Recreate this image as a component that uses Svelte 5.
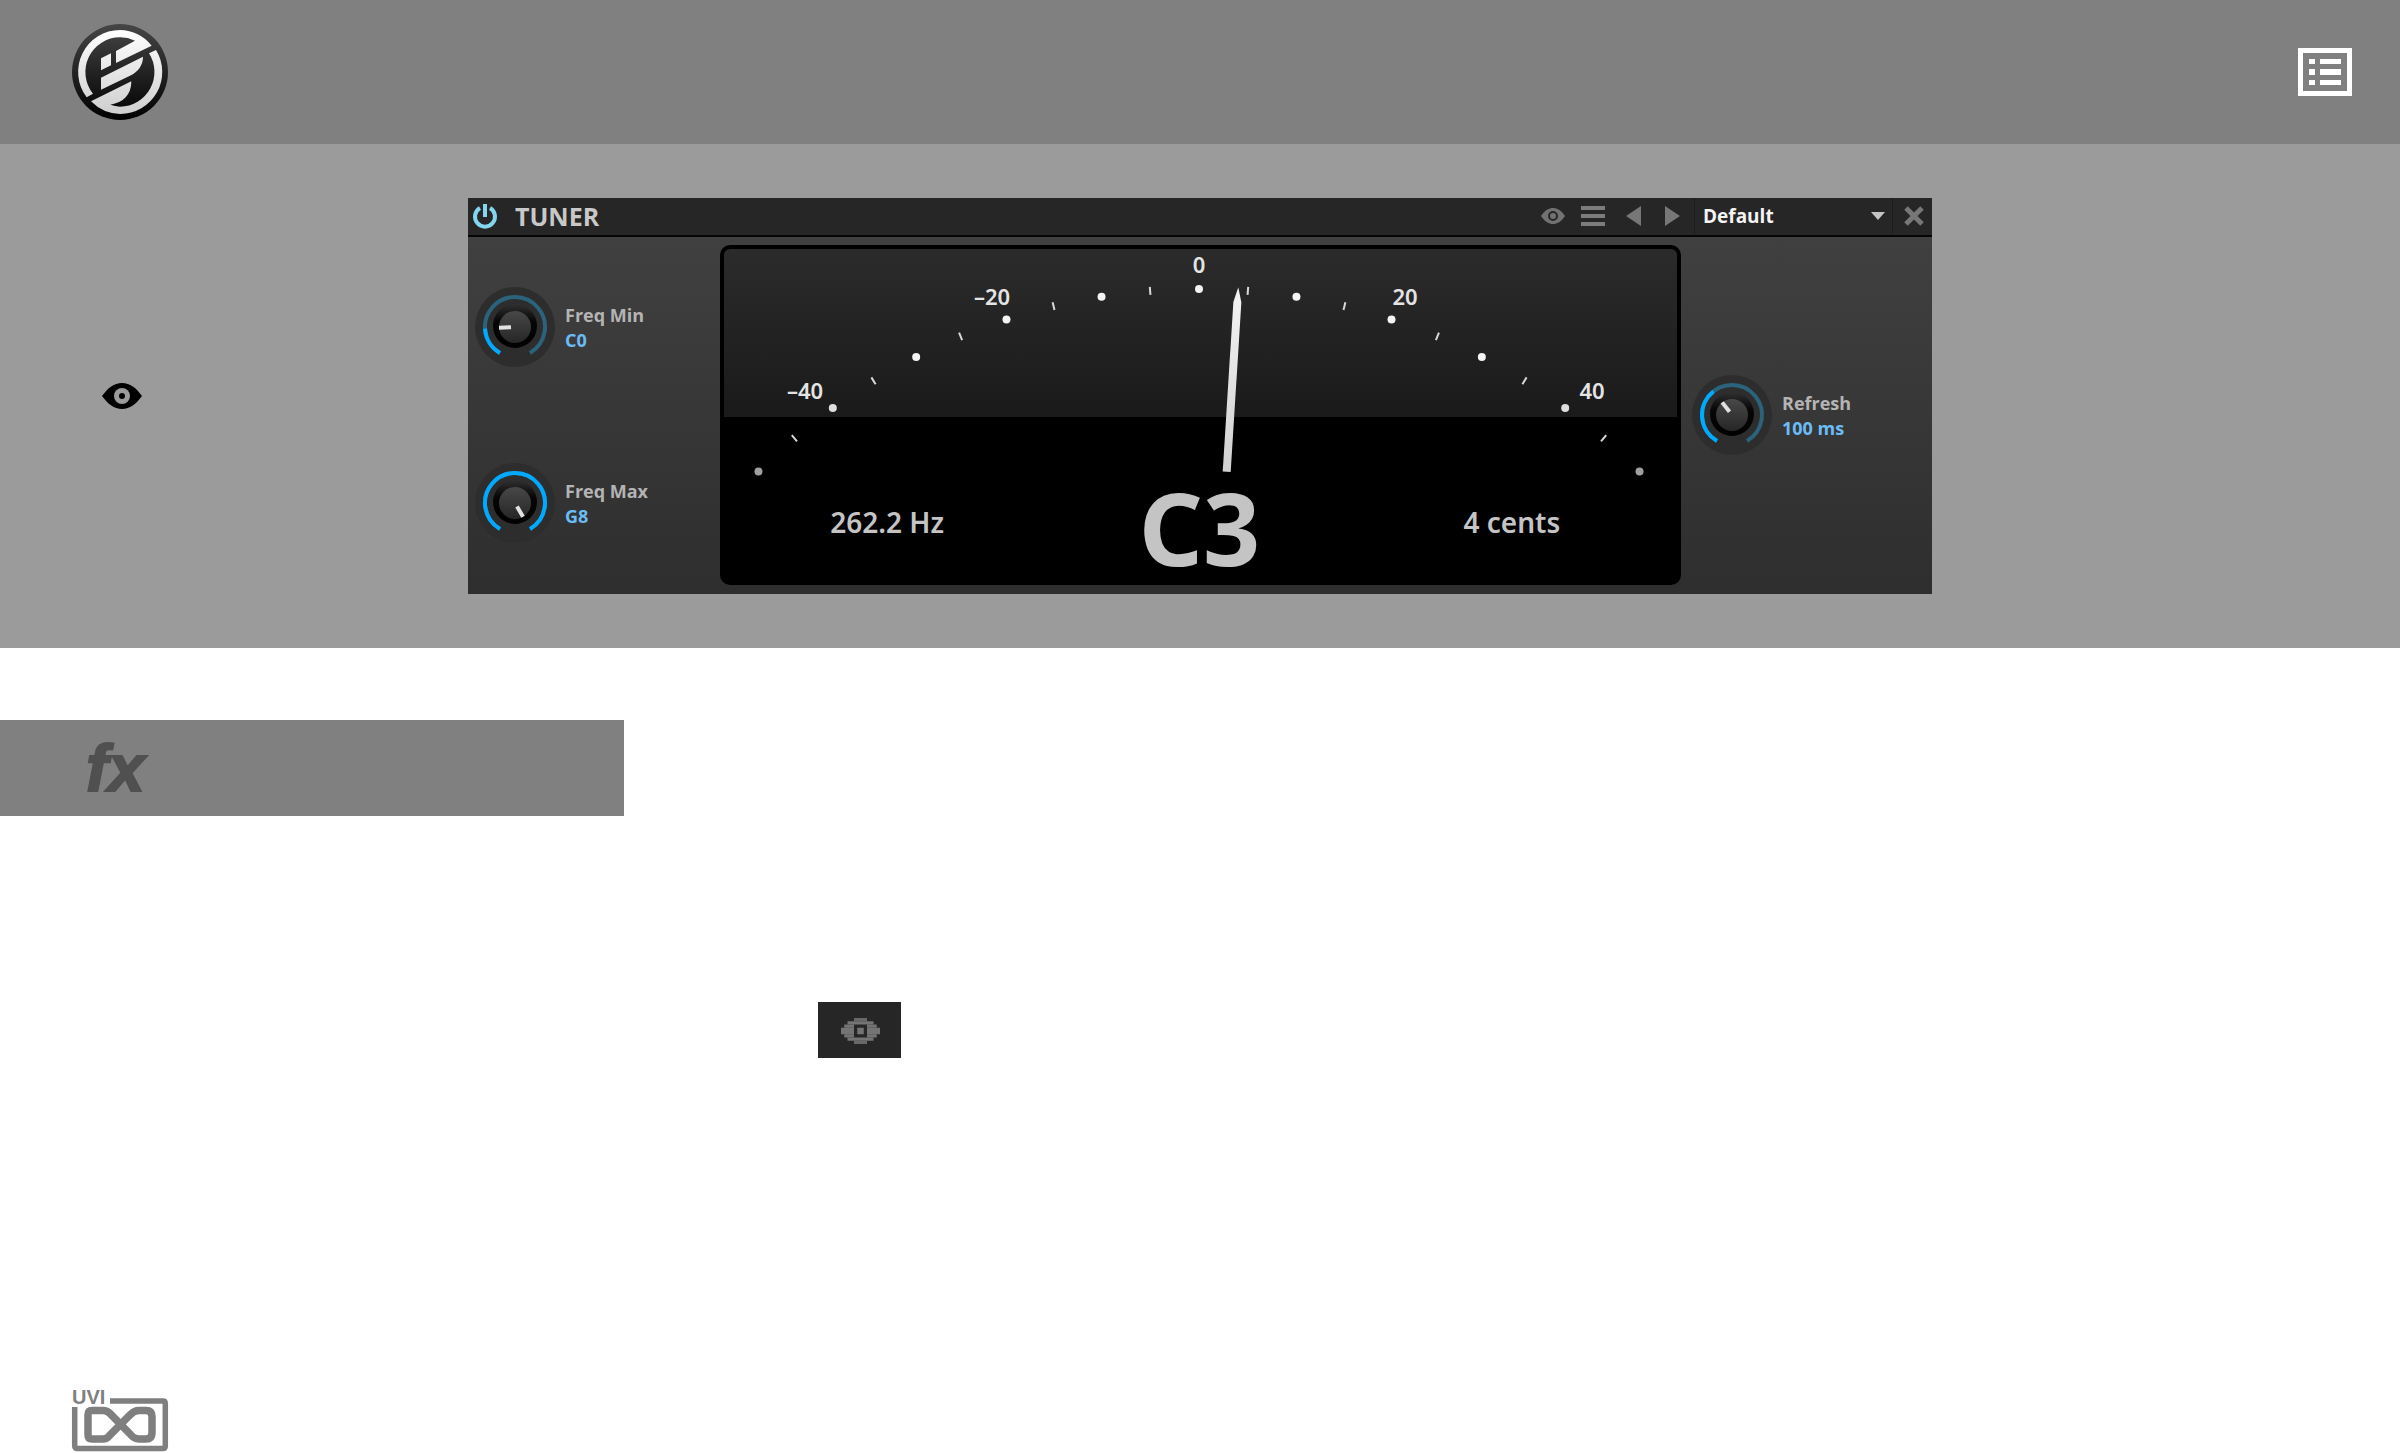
<script>
  const RADIUS = 623;
  const rad = (deg) => (deg * Math.PI) / 180;

  // One cent of detune turns the scale by 0.9 degrees.
  const onArc = (cents, r) => ({
    x: r * Math.sin(rad(cents * 0.9)),
    y: RADIUS - r * Math.cos(rad(cents * 0.9))
  });

  const dots = [-50, -40, -30, -20, -10, 0, 10, 20, 30, 40, 50].map((c) => ({
    ...onArc(c, RADIUS),
    shade: c === 50 || c === -50 ? '#a0a0a0' : Math.abs(c) === 40 ? '#dedede' : '#f4f4f4'
  }));
  const ticks = [-45, -35, -25, -15, -5, 5, 15, 25, 35, 45].map((c) => ({
    from: onArc(c, RADIUS - 4),
    to: onArc(c, RADIUS + 4)
  }));
  const labels = [
    { text: '–40', x: -394, y: 110 },
    { text: '–20', x: -207, y: 16 },
    { text: '0', x: 0, y: -16 },
    { text: '20', x: 206, y: 16 },
    { text: '40', x: 393, y: 110 }
  ];

  function arc(from, to) {
    const r = 30;
    const p = (a) => `${(r * Math.sin(rad(a))).toFixed(2)} ${(-r * Math.cos(rad(a))).toFixed(2)}`;
    return `M${p(from)}A${r} ${r} 0 ${to - from > 180 ? 1 : 0} 1 ${p(to)}`;
  }

  const freqMin = { id: 'freq-min', name: 'Freq Min', value: 'C0', angle: -93 };
  const freqMax = { id: 'freq-max', name: 'Freq Max', value: 'G8', angle: 150 };
  const refresh = { id: 'refresh', name: 'Refresh', value: '100 ms', angle: -38 };

  const pixelRows = [
    [[4, 4]],
    [[2, 8]],
    [[1, 3], [8, 3]],
    [[0, 4], [5, 2], [8, 4]],
    [[0, 4], [5, 2], [8, 4]],
    [[1, 3], [8, 3]],
    [[2, 8]],
    [[4, 4]]
  ];
</script>

{#snippet knob(k)}
  <div class="knob">
    <div class="dial">
      <svg viewBox="-40 -40 80 80" aria-hidden="true">
        <circle r="40" fill="#2d2d2d" />
        <path d={arc(-150, 150)} fill="none" stroke="#2a637b" stroke-width="4" />
        <path d={arc(-150, k.angle)} fill="none" stroke="#00aaff" stroke-width="4" />
        <circle r="22" cy="-1" fill="url(#well)" />
        <circle r="16" fill="url(#cap)" />
        <rect x="-2" y="-16" width="4" height="12" fill="#e2e2e2" transform="rotate({k.angle})" />
      </svg>
      <input type="range" id={k.id} min="-150" max="150" value={k.angle} />
    </div>
    <label for={k.id}>
      <span>{k.name}</span>
      <span class="value">{k.value}</span>
    </label>
  </div>
{/snippet}

<div class="page">
  <header class="top">
    <a href="#home" aria-label="Home">
      <svg width="96" height="96" viewBox="66 72 288 288">
        <defs>
          <linearGradient id="disc" x1="0" y1="0" x2="0" y2="1">
            <stop offset="0" stop-color="#464646" /><stop offset="1" stop-color="#000" />
          </linearGradient>
          <linearGradient id="mark" gradientUnits="userSpaceOnUse" x1="0" y1="90" x2="0" y2="342">
            <stop offset="0" stop-color="#fff" /><stop offset="1" stop-color="#cecece" />
          </linearGradient>
        </defs>
        <circle cx="210" cy="216" r="144" fill="url(#disc)" />
        <g fill="url(#mark)">
          <path d="M110 292A126 126 0 0 1 210 90A126 126 0 0 1 305 137L198 189V153L255 122A104 104 0 0 0 210 112A104 104 0 0 0 129 281Z" />
          <path d="M318 150A126 126 0 0 1 210 342A126 126 0 0 1 123 304L244 244C244 285 220 308 181 314A104 104 0 0 0 210 320A104 104 0 0 0 297 160Z" />
          <path d="M153 269V233L279 170C279 195 265 215 240 227Z" />
          <path d="M153 175L183 160V196L153 211Z" />
        </g>
      </svg>
    </a>
    <button class="bare" aria-label="Contents">
      <svg width="54" height="48" viewBox="0 0 54 48">
        <rect x="2.5" y="2.5" width="49" height="43" fill="none" stroke="#fff" stroke-width="5" />
        <path fill="#fff" d="M11 11h6v5h-6zM11 21h6v6h-6zM11 32h6v5h-6zM22 11h21v5h-21zM22 21h21v6h-21zM22 32h21v5h-21z" />
      </svg>
    </button>
  </header>

  <section class="stage">
    <div class="side">
      <svg width="40" height="26" viewBox="0 0 40 26">
        <path fill="#000" d="M0 13C6 5 12 0 20 0S34 5 40 13C34 21 28 26 20 26S6 21 0 13Z" />
        <circle cx="20" cy="13" r="8" fill="#9b9b9b" />
        <circle cx="20" cy="13" r="3" fill="#000" />
      </svg>
    </div>

    <div class="plugin">
      <div class="bar">
        <button class="bare" aria-label="Power">
          <svg width="24" height="24" viewBox="0 0 24 24" fill="none" stroke="#83d6ee" stroke-width="4">
            <path d="M7 4A10 10 0 1 0 17 4M12 0V13" />
          </svg>
        </button>
        <h1>TUNER</h1>
        <div class="tools">
          <button class="bare" aria-label="Show">
            <svg width="24" height="16" viewBox="0 0 24 16">
              <path fill="#727272" d="M0 8C4 2 8 0 12 0S20 2 24 8C20 14 16 16 12 16S4 14 0 8Z" />
              <circle cx="12" cy="8" r="4" fill="none" stroke="#262626" stroke-width="2" />
            </svg>
          </button>
          <button class="bare" aria-label="Menu">
            <svg width="24" height="20" viewBox="0 0 24 20"><path fill="#7c7c7c" d="M0 0h24v4H0zM0 8h24v4H0zM0 16h24v4H0z" /></svg>
          </button>
          <button class="bare arrow" aria-label="Previous preset">
            <svg width="15" height="20" viewBox="0 0 15 20"><path fill="#777" d="M0 10L15 0V20Z" /></svg>
          </button>
          <button class="bare arrow" aria-label="Next preset">
            <svg width="15" height="20" viewBox="0 0 15 20"><path fill="#777" d="M15 10L0 0V20Z" /></svg>
          </button>
        </div>
        <div class="preset">
          <select aria-label="Preset"><option>Default</option></select>
          <svg width="14" height="8" viewBox="0 0 14 8"><path fill="#c4c4c4" d="M0 0H14L7 8Z" /></svg>
        </div>
        <button class="bare close" aria-label="Close">
          <svg width="20" height="20" viewBox="0 0 20 20"><path stroke="#777" stroke-width="5" d="M2 2L18 18M18 2L2 18" /></svg>
        </button>
      </div>

      <div class="body">
        <div class="column pair">
          {@render knob(freqMin)}
          {@render knob(freqMax)}
        </div>

        <div class="display">
          <svg class="scale" viewBox="-475 -40 953 224">
            <defs>
              <linearGradient id="glass" x1="0" y1="0" x2="0" y2="1">
                <stop offset="0" stop-color="#2b2b2b" /><stop offset="1" stop-color="#1a1a1a" />
              </linearGradient>
              <linearGradient id="needle" x1="0" y1="0" x2="0" y2="1">
                <stop offset="0" stop-color="#f4f4f4" /><stop offset="1" stop-color="#d0d0d0" />
              </linearGradient>
              <linearGradient id="cap" x1="0" y1="0" x2="0" y2="1">
                <stop offset="0" stop-color="#484848" /><stop offset="1" stop-color="#262626" />
              </linearGradient>
              <linearGradient id="well" x1="0" y1="0" x2="0" y2="1">
                <stop offset="0" stop-color="#303030" /><stop offset="0.4" stop-color="#060606" /><stop offset="1" stop-color="#000" />
              </linearGradient>
            </defs>
            <path d="M-475 -34a6 6 0 0 1 6 -6H472a6 6 0 0 1 6 6V128H-475Z" fill="url(#glass)" />
            {#each dots as d}
              <circle cx={d.x} cy={d.y} r="4" fill={d.shade} />
            {/each}
            {#each ticks as t}
              <line x1={t.from.x} y1={t.from.y} x2={t.to.x} y2={t.to.y} stroke="#d8d8d8" stroke-width="2" />
            {/each}
            {#each labels as l}
              <text x={l.x} y={l.y}>{l.text}</text>
            {/each}
            <path d="M0 -3L4 12V182H-4V12Z" fill="url(#needle)" transform="rotate(3.6 0 {RADIUS})" />
          </svg>
          <div class="readouts">
            <output>262.2 Hz</output>
            <output class="note">C3</output>
            <output>4 cents</output>
          </div>
        </div>

        <div class="column">
          {@render knob(refresh)}
        </div>
      </div>
    </div>
  </section>

  <main>
    <h2 class="category">fx</h2>
    <div class="figure">
      <svg width="83" height="56" viewBox="0 0 83 56">
        <rect width="83" height="56" fill="#262626" />
        <g transform="translate(23 16) scale(3.25)" fill="#747474">
          {#each pixelRows as row, y}
            {#each row as [x, w]}
              <rect {x} {y} width={w} height="1" opacity={y === 0 || y === 7 ? 0.85 : 1} />
            {/each}
          {/each}
        </g>
      </svg>
    </div>
  </main>

  <footer>
    <a href="#uvi" aria-label="UVI">
      <svg width="96" height="63" viewBox="0 0 96 63">
        <text class="brand" x="0" y="15">UVI</text>
        <g fill="none" stroke="#7f7f7f">
          <path stroke-width="5.5" d="M38 12H91Q93.300 12 93.300 14.500V57Q93.300 59.500 91 59.500H5Q2.700 59.500 2.700 57V18" />
          <path stroke-width="7.500" d="M20 21.500H31Q35 21.500 38 24.500L58 45Q62 50 67 50H74Q80 50 80 44V27.500Q80 21.500 74 21.500H67Q62 21.500 58 26L38 46Q35 50 31 50H20Q16 50 16 46V26Q16 21.500 20 21.500Z" />
        </g>
      </svg>
    </a>
  </footer>
</div>

<style>
  :global(body) {
    margin: 0;
    background: #fff;
  }
  .page {
    display: flex;
    flex-direction: column;
    min-height: 100vh;
    font-family: 'Open Sans', 'Noto Sans', sans-serif;
  }
  svg {
    display: block;
    overflow: visible;
  }
  .bare {
    padding: 0;
    border: 0;
    background: none;
  }
  .top {
    display: flex;
    align-items: center;
    justify-content: space-between;
    height: 144px;
    padding: 0 48px 0 72px;
    background: #808080;
  }
  .stage {
    display: grid;
    grid-template-columns: 1fr 61% 1fr;
    align-items: center;
    padding: 54px 0;
    background: #9b9b9b;
  }
  .side {
    padding-left: 102px;
  }
  .plugin {
    background: linear-gradient(#424242, #2e2e2e);
  }
  .bar {
    display: flex;
    align-items: center;
    height: 36px;
    padding: 0 0 1px 5px;
    border-bottom: 2px solid #050505;
    background: #262626;
  }
  h1 {
    margin: 0 0 0 18px;
    color: #c8c8c8;
    font-size: 25px;
    line-height: 36px;
    font-weight: 700;
  }
  .tools {
    display: flex;
    align-items: center;
    gap: 16px;
    margin: 0 14px 0 auto;
  }
  .arrow {
    margin-left: 5px;
  }
  .arrow + .arrow {
    margin-left: 8px;
  }
  .preset {
    display: flex;
    align-items: center;
    width: 199px;
    height: 36px;
    box-sizing: border-box;
    padding: 0 7px 0 8px;
    border: solid #1c1c1c;
    border-width: 0 1px;
  }
  select {
    flex: 1;
    appearance: none;
    padding: 0;
    border: 0;
    background: none;
    color: #f4f4f4;
    font: 700 19px/28px 'Open Sans', sans-serif;
  }
  .close {
    margin: 0 8px 0 11px;
  }
  .body {
    display: grid;
    grid-template-columns: 252fr 961fr 251fr;
    padding: 8px 0 9px;
  }
  .column {
    display: flex;
    flex-direction: column;
    justify-content: center;
    padding: 0 7px;
  }
  .pair {
    gap: 96px;
  }
  .knob {
    display: flex;
    align-items: center;
    gap: 10px;
  }
  .column:last-child .knob {
    margin-left: 4px;
  }
  .dial {
    position: relative;
    width: 80px;
    height: 80px;
  }
  .dial input {
    position: absolute;
    inset: 0;
    width: 100%;
    height: 100%;
    margin: 0;
    opacity: 0;
  }
  label {
    display: flex;
    flex-direction: column;
    padding-top: 2px;
    color: #b4b4b4;
    font-size: 18px;
    line-height: 25px;
    font-weight: 700;
  }
  .value {
    color: #6bbcf5;
  }
  .display {
    border: 4px solid #000;
    border-radius: 10px;
    background: #000;
  }
  .scale {
    width: 100%;
  }
  .scale text {
    fill: #e4e4e4;
    font: 600 22px 'Noto Sans', sans-serif;
    text-anchor: middle;
  }
  .readouts {
    display: grid;
    grid-template-columns: 1fr 1fr 1fr;
    align-items: center;
    height: 108px;
    padding: 0 9px 0 7px;
    color: #c4c4c4;
    font: 600 28px/40px 'Noto Sans', sans-serif;
    text-align: center;
  }
  .readouts output {
    padding-bottom: 10px;
  }
  .readouts .note {
    padding: 0;
    font-size: 100px;
    line-height: 100px;
    font-weight: 700;
  }
  .category {
    width: 26%;
    box-sizing: border-box;
    margin: 72px 0 0;
    padding-left: 86px;
    background: #808080;
    color: #505050;
    font-family: 'Liberation Sans', Arial, sans-serif;
    font-size: 66px;
    line-height: 96px;
    font-weight: 700;
    font-style: italic;
    -webkit-text-stroke: 2px #505050;
  }
  .figure {
    padding: 186px 0 0 818px;
  }
  footer {
    margin-top: auto;
    padding: 0 72px 1px;
  }
  footer a {
    display: inline-block;
    vertical-align: top;
  }
  .brand {
    fill: #7f7f7f;
    font: 700 20px 'Liberation Sans', sans-serif;
  }
</style>
